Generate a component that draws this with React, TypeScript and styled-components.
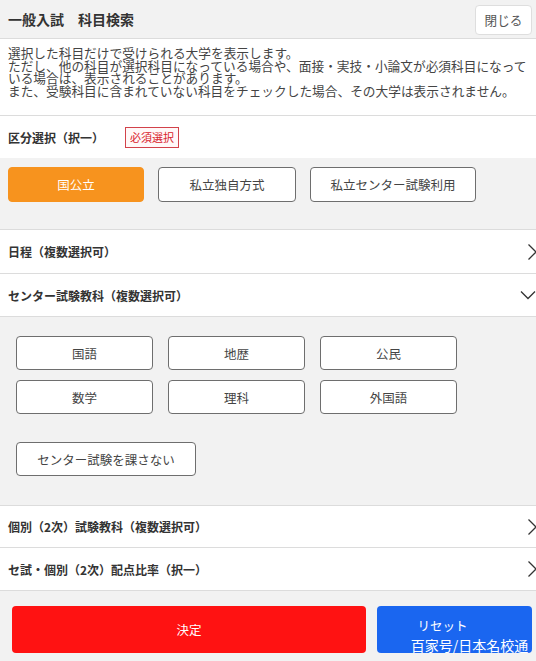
import styled, { createGlobalStyle } from "styled-components";

const GlobalStyle = createGlobalStyle`
  html, body {
    margin: 0;
    padding: 0;
    background: #ffffff;
    overflow: hidden;
  }
  body {
    font-family: "Noto Sans CJK JP", "Noto Sans", sans-serif;
    color: #333333;
  }
  * {
    box-sizing: border-box;
  }
`;

const Page = styled.div`
  width: 536px;
  height: 661px;
  display: flex;
  flex-direction: column;
  overflow: hidden;
`;

const Header = styled.header`
  height: 39px;
  display: flex;
  align-items: center;
  justify-content: space-between;
  padding: 0 4px 0 8px;
  background: #f2f2f2;
  border-bottom: 1px solid #dcdcdc;
`;

const Title = styled.h1`
  margin: 0;
  font-size: 14px;
  font-weight: 700;
  color: #333;
  white-space: pre;
`;

const CloseButton = styled.button`
  width: 57px;
  height: 30px;
  margin-top: 1px;
  border: 1px solid #dedede;
  border-radius: 4px;
  background: #ffffff;
  font-family: inherit;
  font-size: 12.6px;
  color: #555;
  padding: 0;
`;

const Description = styled.div`
  height: 77px;
  padding: 8px 0 0 8px;
  font-size: 12.7px;
  line-height: 12.5px;
  color: #444;
  background: #fff;
  border-bottom: 1px solid #dcdcdc;
`;

const SectionHead = styled.div`
  height: 42px;
  display: flex;
  align-items: center;
  gap: 21px;
  padding: 0 8px;
  background: #fff;
`;

const SectionLabel = styled.span`
  font-size: 12px;
  font-weight: 700;
  color: #333;
`;

const Badge = styled.span`
  height: 21px;
  display: inline-flex;
  align-items: center;
  padding: 0 4px;
  border: 1px solid #d2424a;
  background: #fff8f8;
  color: #d8202a;
  font-size: 11px;
`;

const GrayArea = styled.div<{ $pt: number; $pb: number; $px: number; $divided?: boolean }>`
  background: #f2f2f2;
  padding: ${(p) => p.$pt}px ${(p) => p.$px}px ${(p) => p.$pb}px;
  border-top: ${(p) => (p.$divided ? "1px solid #dcdcdc" : "none")};
`;

const ChoiceRow = styled.div`
  display: flex;
  gap: 14px;
`;

const OptionButton = styled.button<{ $w: number; $h: number; $active?: boolean }>`
  width: ${(p) => p.$w}px;
  height: ${(p) => p.$h}px;
  padding: 0;
  border-radius: 4px;
  font-family: inherit;
  font-size: 12.5px;
  border: 1px solid ${(p) => (p.$active ? "#f7931e" : "#6e6e6e")};
  background: ${(p) => (p.$active ? "#f7931e" : "#ffffff")};
  color: ${(p) => (p.$active ? "#ffffff" : "#444")};
`;

const SubjectGrid = styled.div`
  display: grid;
  grid-template-columns: repeat(3, 137px);
  column-gap: 15px;
  row-gap: 10px;
`;

const ExtraRow = styled.div`
  margin-top: 28px;
`;

const AccordionRow = styled.div<{ $h: number }>`
  height: ${(p) => p.$h}px;
  display: flex;
  align-items: center;
  justify-content: space-between;
  padding-left: 8px;
  background: #fff;
  border-top: 1px solid #dcdcdc;
`;

const RowTitle = styled.span`
  font-size: 12px;
  font-weight: 600;
  color: #333;
`;

const Chevron = styled.svg`
  width: 16px;
  height: 16px;
  flex: none;
  overflow: visible;
`;

const Footer = styled.footer`
  flex: 1;
  display: flex;
  gap: 11px;
  padding: 15px 4px 8px 12px;
  background: #f2f2f2;
  border-top: 1px solid #dcdcdc;
`;

const ActionButton = styled.button<{ $w: number; $bg: string; $stacked?: boolean }>`
  width: ${(p) => p.$w}px;
  height: 47px;
  border: none;
  border-radius: 4px;
  background: ${(p) => p.$bg};
  color: #fff;
  font-family: inherit;
  font-size: 12.5px;
  padding: 0;
  display: flex;
  flex-direction: column;
  align-items: center;
  justify-content: ${(p) => (p.$stacked ? "flex-end" : "center")};
`;

const ResetLabel = styled.span`
  margin-right: 24px;
  margin-bottom: 3px;
  line-height: 16px;
`;

const Watermark = styled.span`
  margin-left: 30px;
  font-size: 14px;
  line-height: 16px;
  white-space: nowrap;
`;

const ChevronRight = () => (
  <Chevron viewBox="0 0 16 16">
    <path d="M8.5 0.5 L16 8 L8.5 15.5" fill="none" stroke="#333" strokeWidth="1.3" />
  </Chevron>
);

const ChevronDown = () => (
  <Chevron viewBox="0 0 16 16">
    <path d="M1 4.5 L8 11.5 L15 4.5" fill="none" stroke="#333" strokeWidth="1.3" />
  </Chevron>
);

const subjects = ["国語", "地歴", "公民", "数学", "理科", "外国語"];

export default function App() {
  return (
    <Page>
      <GlobalStyle />
      <Header>
        <Title>一般入試　科目検索</Title>
        <CloseButton>閉じる</CloseButton>
      </Header>

      <Description>
        選択した科目だけで受けられる大学を表示します。
        <br />
        ただし、他の科目が選択科目になっている場合や、面接・実技・小論文が必須科目になって
        いる場合は、表示されることがあります。
        <br />
        また、受験科目に含まれていない科目をチェックした場合、その大学は表示されません。
      </Description>

      <SectionHead>
        <SectionLabel>区分選択（択一）</SectionLabel>
        <Badge>必須選択</Badge>
      </SectionHead>

      <GrayArea $pt={9} $pb={27} $px={8}>
        <ChoiceRow>
          <OptionButton $w={136} $h={35} $active>
            国公立
          </OptionButton>
          <OptionButton $w={138} $h={35}>
            私立独自方式
          </OptionButton>
          <OptionButton $w={166} $h={35}>
            私立センター試験利用
          </OptionButton>
        </ChoiceRow>
      </GrayArea>

      <AccordionRow $h={44}>
        <RowTitle>日程（複数選択可）</RowTitle>
        <ChevronRight />
      </AccordionRow>
      <AccordionRow $h={43}>
        <RowTitle>センター試験教科（複数選択可）</RowTitle>
        <ChevronDown />
      </AccordionRow>

      <GrayArea $pt={19} $pb={29} $px={16} $divided>
        <SubjectGrid>
          {subjects.map((s) => (
            <OptionButton key={s} $w={137} $h={34}>
              {s}
            </OptionButton>
          ))}
        </SubjectGrid>
        <ExtraRow>
          <OptionButton $w={180} $h={34}>
            センター試験を課さない
          </OptionButton>
        </ExtraRow>
      </GrayArea>

      <AccordionRow $h={42}>
        <RowTitle>個別（2次）試験教科（複数選択可）</RowTitle>
        <ChevronRight />
      </AccordionRow>
      <AccordionRow $h={43}>
        <RowTitle>セ試・個別（2次）配点比率（択一）</RowTitle>
        <ChevronRight />
      </AccordionRow>

      <Footer>
        <ActionButton $w={354} $bg="#ff1212">
          決定
        </ActionButton>
        <ActionButton $w={155} $bg="#1a66f0" $stacked>
          <ResetLabel>リセット</ResetLabel>
          <Watermark>百家号/日本名校通</Watermark>
        </ActionButton>
      </Footer>
    </Page>
  );
}
